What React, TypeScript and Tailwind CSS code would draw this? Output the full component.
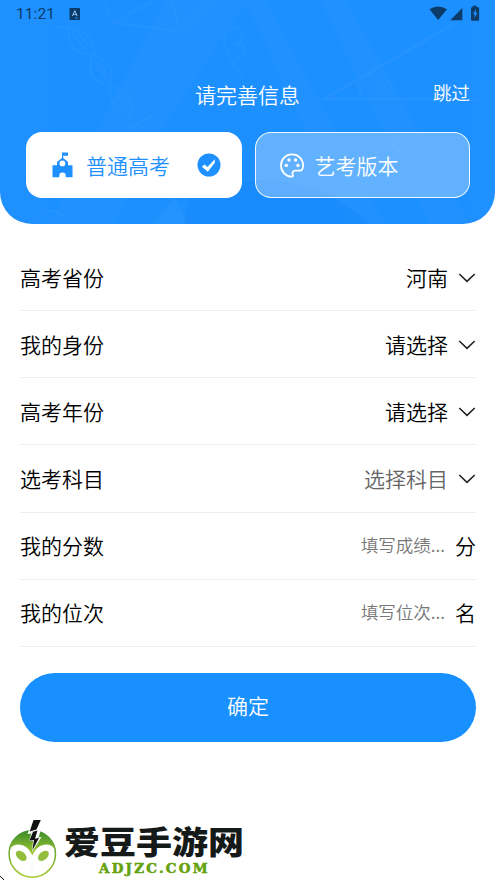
import React from "react";

const rows: { label: string; value: string; kind: "select" | "muted" | "input"; unit?: string }[] = [
  { label: "高考省份", value: "河南", kind: "select" },
  { label: "我的身份", value: "请选择", kind: "select" },
  { label: "高考年份", value: "请选择", kind: "select" },
  { label: "选考科目", value: "选择科目", kind: "muted" },
  { label: "我的分数", value: "填写成绩...", kind: "input", unit: "分" },
  { label: "我的位次", value: "填写位次...", kind: "input", unit: "名" },
];

function HeaderPattern() {
  return (
    <svg className="absolute inset-0" width="495" height="224" viewBox="0 0 495 224" fill="none">
      <g fill="#fff" opacity="0.012">
        <path d="M165 0h82L158 135l-45 89H50Z" />
        <path d="M245 0h20L385 224h-35Z" />
        <path d="M320 0h25L470 224h-40Z" />
      </g>
      <path d="M175 198L188 224H152Z" fill="#fff" opacity="0.03" />
      <path d="M190 195q100-40 180 29H183Z" fill="#0070e0" opacity="0.1" />
      <g stroke="#fff" strokeWidth="1.6" opacity="0.03">
        <path d="M103 0l11 23 67 8L211 0M114 23l40-23M172 0l8 31" />
        <path d="M55 26c20 4 40 4 39 29-25-1-26-13-25-29M92 55c20 4 22 16 18 31-21-4-21-15-18-31M110 86c16 2 25 12 21 27-18-3-22-14-21-27" />
        <path d="M73 35l13 15M77 32l13 15M96 62l10 17M101 63l8 14M115 92l12 15M120 92l9 12" />
        <path d="M245 78Q224 55 224 40c0-16 18-17 18-3 0 6-5 7-8 7 14-2 15 13 0 16" />
        <path d="M452 25L324 99h155M357 82q6 8 3 17" strokeWidth="3" />
        <path d="M130 115v14l22-14M36 220q13-17 29-3M376 153l20-10 3 10" />
      </g>
      <text x="376" y="91" fill="#fff" opacity="0.04" className="font-['Roboto'] text-[14px]">30°</text>
    </svg>
  );
}

function StatusBar() {
  return (
    <div className="relative flex h-7 items-center justify-between pl-[16px] pr-[15px] text-[#0c3b69]">
      <div className="flex items-center gap-[14px]">
        <span className="pt-[2px] font-['Roboto',sans-serif] text-[15.5px] font-normal leading-none tracking-[0.1px]">11:21</span>
        <svg className="-mt-px" width="12" height="12" viewBox="0 0 12 12">
          <rect x="0.5" width="10.5" height="12" rx="1" fill="currentColor" />
          <path d="M3.4 8L5.8 2.6 8.2 8M4.2 6.4h3.2" fill="none" stroke="#8cc8ff" strokeWidth="1" />
          <path d="M6 10h3" stroke="#1e90ff" />
        </svg>
      </div>
      <svg className="-mt-[2px]" width="52" height="16" viewBox="0 0 52 16" fill="currentColor">
        <path d="M1.5 4.2Q10.2-1.3 19 4.2L10.2 15Z" />
        <path d="M34.3 3.1V15.3H22.3Z" />
        <path d="M44.7.8h4v1.4h1.4q1 0 1 1v11.5q0 1-1 1H44q-1 0-1-1V3.2q0-1 1-1h.7Z" />
        <path d="M47.8 4L45 9.2h1.6v3.8l2.8-5.2h-1.6Z" fill="#1e90ff" />
      </svg>
    </div>
  );
}

function SchoolIcon() {
  return (
    <svg width="21" height="26" viewBox="0 0 21 26" fill="#1e90ff" fillRule="evenodd">
      <path d="M10 6V0.5h6v3.2h-4.8V6l4.8 4v3.2h4.5v12h-6.8v-1.5a3.2 3.2 0 0 0-6.4 0v1.5H.5v-12H5V10l5-4ZM10.4 8.5a2.9 2.9 0 1 0 0 5.8 2.9 2.9 0 0 0 0-5.8Z" />
    </svg>
  );
}

function PaletteIcon() {
  return (
    <svg width="24" height="25" viewBox="0 0 24 25" fill="none">
      <path
        d="M12.2 1.4C5.5 1.4 1 6.2 1 12.4s4.8 11.3 10.8 11.3c1.2 0 1.4-.7 1-1.8-.8-2.3-.2-4.2 2.5-4.2h4.5c1.9 0 3.3-1.9 3.3-5.2C23.1 6 18.4 1.4 12.2 1.4Z"
        stroke="#fff"
        strokeWidth="1.8"
      />
      <g fill="#fff">
        <circle cx="9" cy="7" r="1.7" />
        <circle cx="15.5" cy="7" r="1.7" />
        <circle cx="6.3" cy="12.4" r="1.7" />
        <circle cx="18" cy="12.4" r="1.7" />
      </g>
    </svg>
  );
}

function CheckIcon() {
  return (
    <svg width="24" height="24" viewBox="0 0 24 24">
      <circle cx="12" cy="12" r="11.5" fill="#1e90ff" />
      <path d="M4.8 13.8L7.4 11.6 10.5 14 17.8 6.3V9.7L10.8 18.8Z" fill="#fff" />
    </svg>
  );
}

function Chevron() {
  return (
    <svg className="ml-[10px] mt-px" width="18" height="10" viewBox="0 0 18 10" fill="none" stroke="#222" strokeWidth="1.6">
      <path d="M1.3 1L9 8.3L16.7 1" />
    </svg>
  );
}

function SiteLogo() {
  return (
    <div className="flex h-[60px] pl-[8px]">
      <svg width="50" height="60" viewBox="0 0 50 60">
        <defs>
          <linearGradient id="leaf" x1="0" y1="0" x2="0" y2="1">
            <stop offset="0" stopColor="#388b2d" />
            <stop offset="1" stopColor="#a9ca31" />
          </linearGradient>
        </defs>
        <circle cx="24.3" cy="34" r="23.2" fill="#fff" stroke="url(#leaf)" strokeWidth="1.5" />
        <path d="M1.5 29.5A23.2 23.2 0 0 1 47.1 29.5C42 21 29 23.5 24.3 35.5C19.5 23.5 7 21 1.5 29.5Z" fill="url(#leaf)" />
        <ellipse cx="13.2" cy="35.8" rx="6.3" ry="4" transform="rotate(42 13.2 35.8)" fill="#94bd3d" />
        <ellipse cx="35.4" cy="35.8" rx="6.3" ry="4" transform="rotate(-42 35.4 35.8)" fill="#94bd3d" />
        <path d="M24.5 0h9l-3.5 10 3-.5-2.5 8 3-.5L24 32l1-11h-4l2.5-7.5-4 .5Z" fill="#fff" />
        <path d="M25.5 0h7.3l-4.3 9.5-6.8 2ZM22.5 12.5l7-2-2.5 8.2 4.2-.9-6.7 12.2 1.4-10-4.6.8 3.7-8.8Z" fill="#111" />
        <circle cx="24" cy="49" r="0.5" fill="#bbb" />
      </svg>
      <div className="flex flex-col pl-[6px]">
        <div className="h-[43px] w-[160px] origin-left scale-x-[1.125] whitespace-nowrap font-['Noto_Sans_CJK_SC',sans-serif] text-[32px] font-black leading-[41px] text-[#151a18]">
          爱豆手游网
        </div>
        <div className="ml-[35px] w-[110px] origin-left scale-x-[1.12] font-['DejaVu_Serif',serif] text-[12px] font-bold leading-[13px] tracking-[2px] text-[#65a20d] [-webkit-text-stroke:0.5px_#65a20d]">
          ADJZC.COM
        </div>
      </div>
    </div>
  );
}

export default function App() {
  return (
    <div className="flex h-[880px] w-[495px] flex-col overflow-hidden bg-white font-['Noto_Sans_CJK_SC',sans-serif] text-[21px] font-[350] leading-none text-black">
      <header className="relative h-[224px] shrink-0 overflow-hidden rounded-b-[32px] bg-[#1e90ff] text-white">
        <HeaderPattern />
        <StatusBar />
        <div className="relative mt-[50px] grid h-[32px] grid-cols-[1fr_auto_1fr] items-center px-[25px]">
          <span />
          <h1 className="font-[350]">请完善信息</h1>
          <button className="justify-self-end pb-1 text-[18.5px] leading-none">跳过</button>
        </div>
        <div className="relative mt-[22px] grid grid-cols-2 gap-[13px] pl-[26px] pr-[25px]">
          <button className="flex h-[66px] items-center rounded-[16px] bg-white pl-[26px] pr-[20px] text-[#1e90ff]">
            <SchoolIcon />
            <span className="ml-[13px]">普通高考</span>
            <span className="ml-auto mr-px"><CheckIcon /></span>
          </button>
          <button className="flex h-[66px] items-center rounded-[16px] border border-white/90 bg-white/30 pl-[24px]">
            <PaletteIcon />
            <span className="ml-[11px]">艺考版本</span>
          </button>
        </div>
      </header>

      <main className="pl-5 pr-[19px] pt-[20px]">
        {rows.map((row) => (
          <div key={row.label} className="flex h-[67.15px] items-center border-b border-[#ededed]">
            <span>{row.label}</span>
            <span className="flex-1" />
            {row.kind === "input" ? (
              <>
                <span className="pb-[2px] text-[17.5px] text-[#777]">{row.value}</span>
                <span className="ml-[10px]">{row.unit}</span>
              </>
            ) : (
              <>
                <span className={row.kind === "muted" ? "text-[#666]" : ""}>{row.value}</span>
                <Chevron />
              </>
            )}
          </div>
        ))}
        <button className="mt-[26px] flex h-[69px] w-full items-center justify-center rounded-[34.5px] bg-[#1890ff] pb-[4px] text-white">
          确定
        </button>
      </main>

      <footer className="relative mt-auto h-[60px] shrink-0">
        <SiteLogo />
        <svg className="absolute bottom-0 left-0" width="4" height="5" viewBox="0 0 4 5">
          <path d="M0 1h1v1h1v1h1v1h1v1H3V4H2V3H1V2H0Z" fill="#111" />
        </svg>
      </footer>
    </div>
  );
}
